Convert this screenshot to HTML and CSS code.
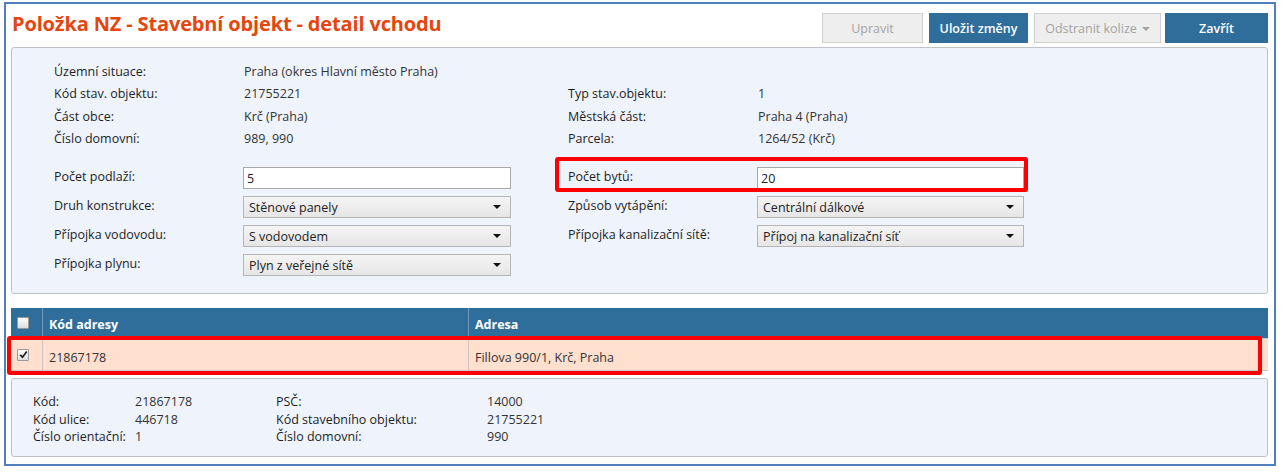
FILE: index.html
```html
<!DOCTYPE html>
<html lang="cs">
<head>
<meta charset="utf-8">
<title>Položka NZ - Stavební objekt - detail vchodu</title>
<link rel="stylesheet" href="styles.css">
</head>
<body>
<div class="frame">
  <div class="topbar">
    <h1 class="title">Položka NZ - Stavební objekt - detail vchodu</h1>
    <div class="actions">
      <button class="btn btn-disabled btn-upravit">Upravit</button>
      <button class="btn btn-primary btn-ulozit">Uložit změny</button>
      <button class="btn btn-disabled btn-kolize">Odstranit kolize <span class="caret-sm"></span></button>
      <button class="btn btn-primary btn-zavrit">Zavřít</button>
    </div>
  </div>

  <div class="panel main-panel">
    <div class="info">
      <div class="lbl">Územní situace:</div><div class="val">Praha (okres Hlavní město Praha)</div><div></div><div></div>
      <div class="lbl">Kód stav. objektu:</div><div class="val">21755221</div><div class="lbl">Typ stav.objektu:</div><div class="val">1</div>
      <div class="lbl">Část obce:</div><div class="val">Krč (Praha)</div><div class="lbl">Městská část:</div><div class="val">Praha 4 (Praha)</div>
      <div class="lbl">Číslo domovní:</div><div class="val">989, 990</div><div class="lbl">Parcela:</div><div class="val">1264/52 (Krč)</div>
    </div>
    <div class="form">
      <div class="flbl">Počet podlaží:</div>
      <div class="fctl"><div class="input">5</div></div>
      <div class="flbl">Počet bytů:</div>
      <div class="fctl"><div class="input input-r">20</div></div>

      <div class="flbl">Druh konstrukce:</div>
      <div class="fctl"><div class="select">Stěnové panely<span class="caret"></span></div></div>
      <div class="flbl">Způsob vytápění:</div>
      <div class="fctl"><div class="select select-r">Centrální dálkové<span class="caret"></span></div></div>

      <div class="flbl">Přípojka vodovodu:</div>
      <div class="fctl"><div class="select">S vodovodem<span class="caret"></span></div></div>
      <div class="flbl">Přípojka kanalizační sítě:</div>
      <div class="fctl"><div class="select select-r">Přípoj na kanalizační síť<span class="caret"></span></div></div>

      <div class="flbl">Přípojka plynu:</div>
      <div class="fctl"><div class="select">Plyn z veřejné sítě<span class="caret"></span></div></div>
      <div></div><div></div>
    </div>
  </div>

  <div class="grid">
    <div class="grow ghead">
      <div class="gcell gchk"><span class="chk"></span></div>
      <div class="gcell gcode">Kód adresy</div>
      <div class="gcell gaddr">Adresa</div>
    </div>
    <div class="grow gdata">
      <div class="gcell gchk"><span class="chk chk-on"><svg width="9" height="9" viewBox="0 0 9 9"><path d="M1.2 4.8 L3.5 7.2 L7.8 1.5" fill="none" stroke="#222" stroke-width="1.8"/></svg></span></div>
      <div class="gcell gcode">21867178</div>
      <div class="gcell gaddr">Fillova 990/1, Krč, Praha</div>
    </div>
  </div>

  <div class="panel detail-panel">
    <div class="dlbl">Kód:</div><div class="dval">21867178</div><div class="dlbl">PSČ:</div><div class="dval">14000</div>
    <div class="dlbl">Kód ulice:</div><div class="dval">446718</div><div class="dlbl">Kód stavebního objektu:</div><div class="dval">21755221</div>
    <div class="dlbl">Číslo orientační:</div><div class="dval">1</div><div class="dlbl">Číslo domovní:</div><div class="dval">990</div>
  </div>
</div>

<div class="mark mark-byty"></div>
<div class="mark mark-row"></div>
</body>
</html>
```

FILE: styles.css
```css
* { box-sizing: border-box; }

html, body {
  margin: 0;
  padding: 0;
  background: #ffffff;
}

body {
  position: relative;
  width: 1281px;
  height: 472px;
  overflow: hidden;
  font-family: "Open Sans", "Noto Sans", sans-serif;
  font-size: 12.5px;
  color: #333333;
}

.frame {
  margin: 2px 5px 0 4px;
  border: 2px solid #4f7fbd;
  padding: 0 6px 7px 5px;
}

.topbar {
  height: 43px;
  display: flex;
  align-items: flex-start;
  justify-content: space-between;
}

.title {
  margin: 0;
  padding: 5px 0 0 1px;
  font-size: 20px;
  font-weight: 700;
  line-height: 30px;
  color: #e5460d;
  letter-spacing: -0.15px;
}

.actions {
  display: flex;
  margin-top: 9px;
}

.btn {
  height: 30px;
  border: 1px solid #cccccc;
  font-family: "Open Sans", "Noto Sans", sans-serif;
  font-size: 12.5px;
  padding: 0;
  display: flex;
  align-items: center;
  justify-content: center;
  gap: 5px;
}

.btn-disabled {
  background: #eeeeee;
  color: #a3a3a3;
  border-color: #cfcfcf;
}

.btn-primary {
  background: #2f6e9a;
  border-color: #2f6e9a;
  color: #ffffff;
  font-weight: 600;
}

.btn-upravit { width: 101px; }
.btn-ulozit { width: 99px; margin-left: 6px; }
.btn-kolize { width: 127px; margin-left: 6px; }
.btn-zavrit { width: 103px; margin-left: 4px; }

.caret-sm {
  width: 0;
  height: 0;
  border-left: 4px solid transparent;
  border-right: 4px solid transparent;
  border-top: 4px solid #a3a3a3;
  margin-top: 1px;
}

.panel {
  background: #eff4fc;
  border: 1px solid #bfc3c9;
  border-radius: 3px;
}

.main-panel {
  padding: 12px 0 17px 42px;
}

.info {
  display: grid;
  grid-template-columns: 190px 324px 190px 1fr;
  grid-auto-rows: 22.5px;
  align-items: center;
}

.lbl { color: #1e1e1e; }
.val { color: #333333; }

.form {
  margin-top: 17px;
  display: grid;
  grid-template-columns: 190px 324px 190px 1fr;
  grid-auto-rows: 22px;
  row-gap: 7px;
  align-items: center;
}

.flbl {
  color: #1e1e1e;
  margin-top: -4px;
}

.fctl {
  margin-left: -1px;
}

.input {
  width: 268px;
  height: 22px;
  background: #ffffff;
  border: 1px solid #a9a9a9;
  padding: 2px 0 0 3px;
  line-height: 18px;
  color: #222222;
}

.input-r { width: 267px; }

.select {
  position: relative;
  width: 268px;
  height: 22px;
  background: linear-gradient(#f4f4f4, #e6e6e6);
  border: 1px solid #b5b5b5;
  padding: 1px 0 0 5px;
  line-height: 19px;
  color: #222222;
}

.select-r { width: 267px; }

.caret {
  position: absolute;
  right: 9px;
  top: 8px;
  width: 0;
  height: 0;
  border-left: 4px solid transparent;
  border-right: 4px solid transparent;
  border-top: 4px solid #111111;
}

.grid {
  margin-top: 14px;
  border-bottom: 1px solid #c8c8c8;
}

.grow {
  display: flex;
}

.ghead {
  height: 30px;
  background: #2f6e9a;
  color: #ffffff;
  font-weight: 700;
}

.gdata {
  height: 32px;
  background: #ffe0cf;
  border-top: 1px solid #c9c9c9;
}

.gcell {
  display: flex;
  align-items: center;
  padding-left: 6px;
}

.ghead .gcell + .gcell { border-left: 1px solid #6e99bd; }
.gdata .gcell + .gcell { border-left: 1px solid #cfc3bb; }

.gchk { width: 31px; padding-left: 6px; }
.gcode { width: 426px; }
.gaddr { flex: 1; }

.ghead .gcell { padding-top: 3px; }
.gdata .gcell { padding-top: 6px; }

.chk {
  width: 12px;
  height: 12px;
  border: 1px solid #9a9a9a;
  background: linear-gradient(#ffffff, #dcdcdc);
  display: flex;
  align-items: center;
  justify-content: center;
  border-radius: 1px;
}

.ghead .chk { margin-top: -4px; }
.gdata .chk { margin-top: -6px; }

.detail-panel {
  margin-top: 7px;
  height: 79px;
  padding: 14px 0 0 21px;
  display: grid;
  grid-template-columns: 102px 141px 211px 1fr;
  grid-auto-rows: 17.5px;
  align-items: center;
}

.dlbl { color: #1e1e1e; }
.dval { color: #333333; }

.mark {
  position: absolute;
  border: 4px solid #ff0000;
  border-radius: 3px;
}

.mark-byty {
  left: 555px;
  top: 157px;
  width: 473px;
  height: 35px;
}

.mark-row {
  left: 7px;
  top: 336px;
  width: 1255px;
  height: 39px;
}
```
